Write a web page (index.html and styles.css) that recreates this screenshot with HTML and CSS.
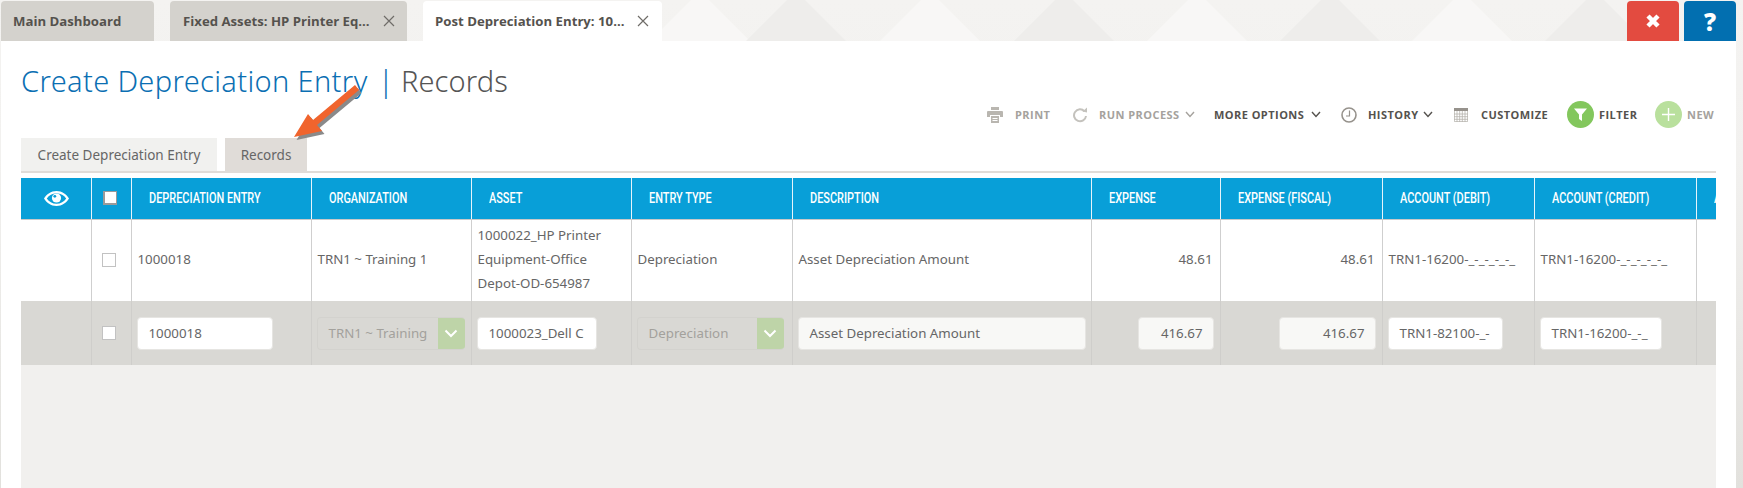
FILE: index.html
```html
<!DOCTYPE html>
<html lang="en">
<head>
<meta charset="utf-8">
<title>Create Depreciation Entry | Records</title>
<link rel="stylesheet" href="styles.css">
</head>
<body>
<svg class="backdrop" width="1743" height="488" viewBox="0 0 1743 488" aria-hidden="true">
  <g fill="#f8f7f6">
    <polygon points="930,-9 880,41 980,41"/>
    <polygon points="1197,-9 1147,41 1247,41"/>
    <polygon points="1462,-9 1412,41 1512,41"/>
    <polygon points="700,-9 650,41 750,41"/>
  </g>
  <g fill="#eeedeb">
    <polygon points="796,-9 746,41 846,41"/>
    <polygon points="1064,-9 1014,41 1114,41"/>
    <polygon points="1330,-9 1280,41 1380,41"/>
    <polygon points="1595,-9 1545,41 1645,41"/>
  </g>
</svg>
<div class="app">
  <header class="topbar">
    <div class="tab tab-main">Main Dashboard</div>
    <div class="tab tab-assets"><span>Fixed Assets: HP Printer Eq...</span><svg class="tab-x" viewBox="0 0 12 12"><path d="M1 1l10 10M11 1L1 11"/></svg></div>
    <div class="tab tab-post active"><span>Post Depreciation Entry: 10...</span><svg class="tab-x" viewBox="0 0 12 12"><path d="M1 1l10 10M11 1L1 11"/></svg></div>
    <div class="top-actions">
      <div class="top-btn close"><svg width="18" height="18" viewBox="0 0 18 18"><path d="M4 4l10 10M14 4L4 14"/></svg></div>
      <div class="top-btn help">?</div>
    </div>
  </header>
  <main class="panel">
    <h1 class="title"><span class="title-main">Create Depreciation Entry</span><span class="title-sep">|</span><span class="title-sub">Records</span></h1>
    <div class="toolbar">
      <div class="tool muted t-print">
        <svg class="ico" width="16" height="16" viewBox="0 0 16 16"><path fill="#b9b6b0" d="M4 0h8v3H4zM1 4h14a1 1 0 0 1 1 1v5h-3V8H3v2H0V5a1 1 0 0 1 1-1z"/><path fill="#b9b6b0" d="M4 9h8v7H4z"/><path stroke="#fff" d="M5.500 11.500h5M5.500 13.500h5"/></svg>
        <span>PRINT</span>
      </div>
      <div class="tool muted t-run">
        <svg class="ico" width="15" height="16" viewBox="0 0 15 16"><path fill="none" stroke="#c4c2bd" stroke-width="2" d="M11.500 4.300A6 6 0 1 0 13 9"/><path fill="#c4c2bd" d="M9.500 4.500L14 .5v5z"/></svg>
        <span>RUN PROCESS</span>
        <svg class="chev" width="10" height="7" viewBox="0 0 10 7"><path d="M1 1l4 4.500L9 1"/></svg>
      </div>
      <div class="tool t-more">
        <span>MORE OPTIONS</span>
        <svg class="chev" width="10" height="7" viewBox="0 0 10 7"><path d="M1 1l4 4.500L9 1"/></svg>
      </div>
      <div class="tool t-hist">
        <svg class="ico" width="16" height="16" viewBox="0 0 16 16"><circle cx="8" cy="8" r="7" fill="none" stroke="#96928c" stroke-width="1.600"/><path fill="none" stroke="#96928c" stroke-width="1.200" d="M8.500 3.500V9H5"/></svg>
        <span>HISTORY</span>
        <svg class="chev" width="10" height="7" viewBox="0 0 10 7"><path d="M1 1l4 4.500L9 1"/></svg>
      </div>
      <div class="tool t-cust">
        <svg class="ico" width="14" height="14" viewBox="0 0 14 14"><path fill="#96928c" d="M0 0h14v3H0z"/><path fill="none" stroke="#b5b2ac" stroke-width=".8" d="M.4 3v10.600h13.200V3M3 3v11M5.700 3v11M8.300 3v11M11 3v11M0 6h14M0 8.700h14M0 11.300h14"/></svg>
        <span>CUSTOMIZE</span>
      </div>
      <div class="tool t-filter">
        <span class="disc green"><svg width="13" height="13" viewBox="0 0 13 13"><path fill="#fff" d="M0 .5h13L8 6.500V13L5 11V6.500z"/></svg></span>
        <span>FILTER</span>
      </div>
      <div class="tool muted t-new">
        <span class="disc pale"><svg width="13" height="13" viewBox="0 0 13 13"><path stroke="#fff" stroke-width="1.400" d="M6.500 0v13M0 6.500h13"/></svg></span>
        <span>NEW</span>
      </div>
    </div>
    <nav class="subtabs">
      <div class="subtab t-first">Create Depreciation Entry</div>
      <div class="subtab t-second">Records</div>
    </nav>
    <div class="grid-wrap">
      <table class="grid">
        <colgroup>
          <col class="c1"><col class="c2"><col class="c3"><col class="c4"><col class="c5"><col class="c6"><col class="c7"><col class="c8"><col class="c9"><col class="c10"><col class="c11"><col class="c12">
        </colgroup>
        <thead>
          <tr>
            <th class="eye"><svg width="25" height="15" viewBox="0 0 25 15"><path fill="#fff" fill-rule="evenodd" d="M12.500 0C18 0 22.500 3.200 25 7.500 22.500 11.800 18 15 12.500 15S2.500 11.800 0 7.500C2.500 3.200 7 0 12.500 0zM12.500 2.200C8.300 2.200 5 4.300 2.800 7.500c2.200 3.200 5.500 5.300 9.700 5.300s7.500-2.100 9.700-5.300C20 4.300 16.700 2.200 12.500 2.200z"/><circle cx="12.500" cy="7" r="4.600" fill="#fff"/><circle cx="10.800" cy="5.300" r="1.400" fill="#089fd8"/></svg></th>
            <th class="chk"><span class="box head-box"></span></th>
            <th><span class="hd">DEPRECIATION ENTRY</span></th>
            <th><span class="hd">ORGANIZATION</span></th>
            <th><span class="hd">ASSET</span></th>
            <th><span class="hd">ENTRY TYPE</span></th>
            <th><span class="hd">DESCRIPTION</span></th>
            <th><span class="hd">EXPENSE</span></th>
            <th><span class="hd">EXPENSE (FISCAL)</span></th>
            <th><span class="hd">ACCOUNT (DEBIT)</span></th>
            <th><span class="hd">ACCOUNT (CREDIT)</span></th>
            <th><span class="hd">A</span></th>
          </tr>
        </thead>
        <tbody>
          <tr class="row-view">
            <td></td>
            <td class="chk"><span class="box"></span></td>
            <td>1000018</td>
            <td>TRN1 ~ Training 1</td>
            <td>1000022_HP Printer Equipment-Office Depot-OD-654987</td>
            <td>Depreciation</td>
            <td>Asset Depreciation Amount</td>
            <td class="num">48.61</td>
            <td class="num">48.61</td>
            <td>TRN1-16200-_-_-_-_-_</td>
            <td>TRN1-16200-_-_-_-_-_</td>
            <td></td>
          </tr>
          <tr class="row-edit">
            <td></td>
            <td class="chk"><span class="box"></span></td>
            <td><div class="field w-entry">1000018</div></td>
            <td><div class="combo w-org"><span class="combo-text">TRN1 ~ Training</span><span class="combo-arrow"><svg width="14" height="9" viewBox="0 0 14 9"><path d="M1.500 1.500L7 7l5.500-5.500"/></svg></span></div></td>
            <td><div class="field w-asset">1000023_Dell C</div></td>
            <td><div class="combo w-type"><span class="combo-text">Depreciation</span><span class="combo-arrow"><svg width="14" height="9" viewBox="0 0 14 9"><path d="M1.500 1.500L7 7l5.500-5.500"/></svg></span></div></td>
            <td><div class="field ro w-desc">Asset Depreciation Amount</div></td>
            <td class="num"><div class="field ro w-exp">416.67</div></td>
            <td class="num"><div class="field ro w-fis">416.67</div></td>
            <td><div class="field w-deb">TRN1-82100-_-</div></td>
            <td><div class="field w-cre">TRN1-16200-_-_</div></td>
            <td></td>
          </tr>
        </tbody>
      </table>
      <div class="grid-rest"></div>
    </div>
  </main>
  <svg class="arrow" width="80" height="70" viewBox="0 0 80 70" aria-hidden="true">
    <path transform="translate(2.500 3)" fill="#8a8a8a" d="M2 58L16 35 21 41 63 6 67 11 25 46 30 52z"/>
    <path fill="#f0642d" d="M2 58L16 35 21 41 63 6 67 11 25 46 30 52z"/>
  </svg>
</div>
</body>
</html>
```
FILE: styles.css
```css
* { box-sizing: border-box; }
html, body { margin: 0; height: 100%; }
body {
  width: 1743px;
  height: 488px;
  overflow: hidden;
  background: linear-gradient(#f4f3f1 0, #f2f1ef 160px, #e2e1dd 488px);
  font-family: "Noto Sans", "Open Sans", sans-serif;
  color: #666;
  position: relative;
}
.backdrop { position: absolute; left: 0; top: 0; }
.app { position: relative; width: 1743px; height: 488px; }

/* top tabs */
.topbar { display: flex; height: 41px; padding: 1px 7px 0 1px; align-items: stretch; }
.tab {
  display: flex;
  align-items: center;
  height: 40px;
  background: #d4d2cd;
  border-radius: 4px 4px 0 0;
  font-family: "Open Sans", sans-serif;
  font-size: 13.200px;
  font-weight: 700;
  color: #55524e;
  white-space: nowrap;
}
.tab.active { background: #fff; }
.tab-main { width: 153px; padding-left: 12px; }
.tab-assets { width: 237px; margin-left: 16px; padding-left: 13px; justify-content: space-between; padding-right: 12px; }
.tab-post { width: 239px; margin-left: 16px; padding-left: 12px; justify-content: space-between; padding-right: 13px; }
.tab-x { width: 12px; height: 12px; fill: none; stroke: #6f6c68; stroke-width: 1.200; flex: none; }
.top-actions { display: flex; gap: 5px; margin-left: auto; }
.top-btn {
  width: 52px;
  height: 40px;
  border-radius: 4px 4px 0 0;
  display: flex;
  align-items: center;
  justify-content: center;
  color: #fff;
}
.close { background: #e34b40; }
.close svg { fill: none; stroke: #fff; stroke-width: 4.500; }
.help { background: #026fb0; font-family: "Open Sans", sans-serif; font-weight: 800; font-size: 24px; }

/* panel */
.panel { margin: 0 7px 0 1px; height: 447px; background: #fff; padding: 0 20px; }
.title {
  margin: 0;
  padding-top: 20px;
  height: 54px;
  font-weight: 300;
  font-size: 29px;
  line-height: 40px;
  white-space: nowrap;
  display: flex;
}
.title-main { color: #0b6fb3; width: 346px; letter-spacing: .36px; }
.title-sep { color: #0b6fb3; margin-left: 11px; width: 23px; }
.title-sub { color: #555; letter-spacing: .1px; }

.toolbar {
  display: flex;
  height: 27px;
  margin-top: 6px;
  align-items: center;
  font-family: "Open Sans", sans-serif;
  font-weight: 700;
  font-size: 11px;
  letter-spacing: .45px;
  color: #55524e;
  white-space: nowrap;
}
.tool { display: flex; align-items: center; }
.tool.muted { color: #a5a29d; }
.t-print { margin-left: 966px; }
.t-print .ico { margin-right: 12px; }
.t-print span { width: 36px; }
.t-run { margin-left: 22px; }
.t-run .ico { margin-right: 11px; }
.t-run span { width: 81px; }
.t-more { margin-left: 19px; }
.t-more span { width: 92px; }
.t-hist { margin-left: 20px; }
.t-hist .ico { margin-right: 11px; }
.t-hist span { width: 50px; }
.t-cust { margin-left: 21px; }
.t-cust .ico { margin-right: 13px; }
.t-cust span { width: 68px; }
.t-filter { margin-left: 18px; }
.t-filter .disc { margin-right: 5px; }
.t-filter > span:last-child { width: 39px; }
.t-new { margin-left: 17px; }
.t-new .disc { margin-right: 5px; }
.chev { margin-left: 5px; fill: none; stroke: currentColor; stroke-width: 1.400; }
.disc {
  width: 27px;
  height: 27px;
  border-radius: 50%;
  display: flex;
  align-items: center;
  justify-content: center;
}
.green { background: #83c75d; }
.pale { background: #b9e09d; }

.subtabs {
  display: flex;
  gap: 8px;
  height: 35px;
  margin-top: 10px;
  border-bottom: 2px solid #e0dcd8;
  font-size: 13.500px;
  color: #666;
}
.subtab { height: 33px; display: flex; align-items: center; justify-content: center; white-space: nowrap; }
.t-first { width: 196px; background: #f1f1ef; }
.t-second { width: 82px; background: #e0dcd8; }

/* grid */
.grid-wrap { width: 1695px; margin-top: 5px; overflow: hidden; height: 310px; background: #f1f0ee; }
.grid { border-collapse: collapse; table-layout: fixed; width: 1845px; }
.c1 { width: 70px; } .c2 { width: 40px; } .c3 { width: 180px; } .c4 { width: 160px; }
.c5 { width: 160px; } .c6 { width: 161px; } .c7 { width: 299px; } .c8 { width: 129px; }
.c9 { width: 162px; } .c10 { width: 152px; } .c11 { width: 162px; } .c12 { width: 170px; }
th {
  height: 41px;
  padding: 0 0 1px 17px;
  background: #089fd8;
  border-left: 1px solid #e5f4fb;
  border-bottom: 1px solid #c9c9c9;
  color: #fff;
  text-align: left;
  font-family: "Roboto", sans-serif;
  font-size: 14px;
  font-weight: 500;
  white-space: nowrap;
}
.hd { display: inline-block; transform: scaleX(.78); transform-origin: left center; }
th:first-child { border-left: 0; }
th.eye { padding: 0 0 0 23px; }
th.eye svg { display: block; }
th.chk { padding: 0 0 0 11px; }
td {
  padding: 0 7px 0 6px;
  border-left: 1px solid #cfcfcf;
  font-size: 13.300px;
  line-height: 24px;
  vertical-align: middle;
  overflow: hidden;
}
td:first-child { border-left: 0; }
td.chk { padding: 0 0 0 10px; }
td.num { text-align: right; }
.row-view td { height: 82px; background: #fff; padding-bottom: 2px; }
.row-view td.chk { padding-bottom: 0; }
.row-edit td { height: 64px; background: #d9d8d4; border-left-color: #cfcecb; padding-left: 5px; }
.row-edit td.chk { padding-left: 10px; }
.box { display: block; width: 14px; height: 14px; background: #fff; border: 1px solid #c2c2c2; }
.head-box { border-color: #9a9a9a; border-width: 1px 1px 2px 2px; }
.field {
  height: 33px;
  background: #fff;
  border: 1px solid #e6e5e2;
  border-radius: 4px;
  padding: 0 10px 0 11px;
  line-height: 30px;
  white-space: nowrap;
  overflow: hidden;
  text-align: left;
}
.field.ro { background: #f8f8f6; }
td.num .field { text-align: right; margin-left: auto; margin-right: -1px; }
.w-entry { width: 136px; } .w-asset { width: 120px; } .w-desc { width: 288px; }
.w-exp { width: 76px; } .w-fis { width: 97px; } .w-deb { width: 115px; } .w-cre { width: 122px; }
.combo {
  height: 33px;
  display: flex;
  border-radius: 4px;
  overflow: hidden;
  background: #d9d8d4;
  border: 1px solid #d3d2ce;
  border-right: 0;
}
.w-org { width: 148px; } .w-type { width: 147px; }
.combo-text { flex: 1; padding-left: 11px; line-height: 30px; color: #a3a19c; white-space: nowrap; overflow: hidden; }
.combo-arrow { width: 27px; background: #bed4a8; display: flex; align-items: center; justify-content: center; }
.combo-arrow svg { fill: none; stroke: #fff; stroke-width: 2; }
.grid-rest { height: 123px; }

.arrow { position: absolute; left: 292px; top: 79px; }
```
